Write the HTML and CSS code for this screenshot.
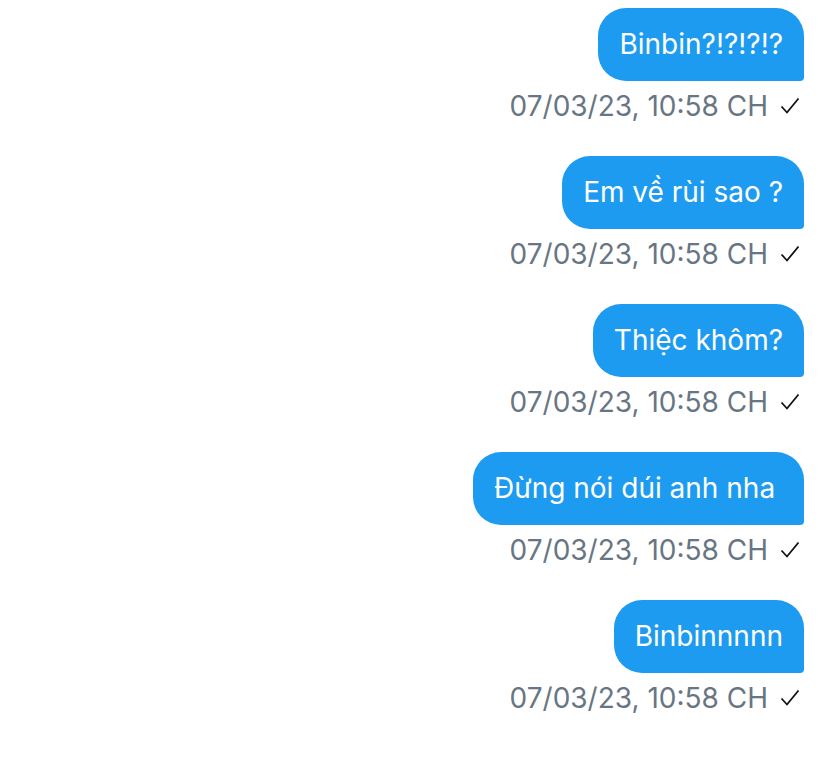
FILE: index.html
```html
<!DOCTYPE html>
<html lang="vi">
<head>
    <meta charset="UTF-8">
    <meta name="viewport" content="width=device-width, initial-scale=1.0">
    <title>Tin nhắn</title>
    <link rel="stylesheet" href="styles.css">
</head>
<body>
    <main class="conversation">
        <div class="message">
            <div class="bubble">Binbin?!?!?!?</div>
            <div class="meta">
                <span class="time">07/03/23, 10:58 CH</span>
                <svg class="check" viewBox="0 0 20 18"><path d="M1.5 9.5 L7 15.5 L18.5 1.5"/></svg>
            </div>
        </div>

        <div class="message">
            <div class="bubble">Em về rùi sao ?</div>
            <div class="meta">
                <span class="time">07/03/23, 10:58 CH</span>
                <svg class="check" viewBox="0 0 20 18"><path d="M1.5 9.5 L7 15.5 L18.5 1.5"/></svg>
            </div>
        </div>

        <div class="message">
            <div class="bubble">Thiệc khôm?</div>
            <div class="meta">
                <span class="time">07/03/23, 10:58 CH</span>
                <svg class="check" viewBox="0 0 20 18"><path d="M1.5 9.5 L7 15.5 L18.5 1.5"/></svg>
            </div>
        </div>

        <div class="message">
            <div class="bubble">Đừng nói dúi anh nha&nbsp;</div>
            <div class="meta">
                <span class="time">07/03/23, 10:58 CH</span>
                <svg class="check" viewBox="0 0 20 18"><path d="M1.5 9.5 L7 15.5 L18.5 1.5"/></svg>
            </div>
        </div>

        <div class="message">
            <div class="bubble">Binbinnnnn</div>
            <div class="meta">
                <span class="time">07/03/23, 10:58 CH</span>
                <svg class="check" viewBox="0 0 20 18"><path d="M1.5 9.5 L7 15.5 L18.5 1.5"/></svg>
            </div>
        </div>
    </main>
</body>
</html>
```

FILE: styles.css
```css
body {
    margin: 0;
    padding: 0;
    background: #fff;
    font-family: Inter, "Noto Sans", Arial, sans-serif;
}

.conversation {
    display: flex;
    flex-direction: column;
    align-items: flex-end;
    gap: 34px;
    padding: 8px 24px 0 0;
}

.message {
    display: flex;
    flex-direction: column;
    align-items: flex-end;
    gap: 9px;
}

.bubble {
    background: #1d9bf0;
    color: #fff;
    font-size: 28px;
    line-height: 33px;
    padding: 20px 21px;
    border-radius: 28px 28px 4px 28px;
    white-space: pre;
}

.meta {
    display: flex;
    align-items: center;
    gap: 12px;
    height: 32px;
    padding-right: 4px;
}

.time {
    color: #687684;
    font-size: 28px;
}

.check {
    width: 20px;
    height: 18px;
    fill: none;
    stroke: #111;
    stroke-width: 1.8;
}
```
